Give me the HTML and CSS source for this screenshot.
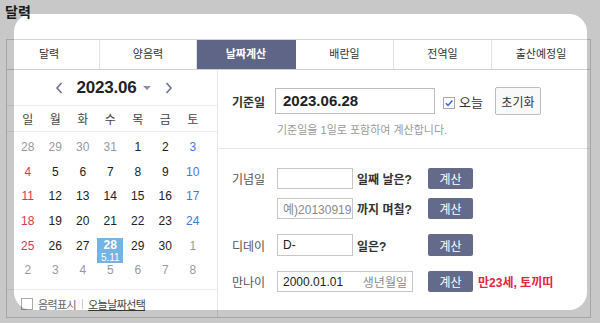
FILE: index.html
```html
<!DOCTYPE html>
<html lang="ko">
<head>
<meta charset="utf-8">
<title>달력</title>
<link rel="stylesheet" href="styles.css">
</head>
<body>
<div class="page">
  <h1 class="title">달력</h1>
  <div class="widget">
    <ul class="tabs">
      <li class="tab t1">달력</li>
      <li class="tab t2">양음력</li>
      <li class="tab t3 active">날짜계산</li>
      <li class="tab t4">배란일</li>
      <li class="tab t5">전역일</li>
      <li class="tab t6">출산예정일</li>
    </ul>
    <div class="content">
      <div class="cal">
        <div class="cal-head">
          <svg class="chev" width="8" height="12" viewBox="0 0 8 12"><path d="M6.5 1 L2 6 L6.5 11"/></svg>
          <span class="ym">2023.06</span>
          <span class="caret"></span>
          <svg class="chev" width="8" height="12" viewBox="0 0 8 12"><path d="M1.5 1 L6 6 L1.5 11"/></svg>
        </div>
        <div class="weekdays">
          <span>일</span><span>월</span><span>화</span><span>수</span><span>목</span><span>금</span><span>토</span>
        </div>
        <div class="days">
          <span class="d off">28</span><span class="d off">29</span><span class="d off">30</span><span class="d off">31</span><span class="d">1</span><span class="d">2</span><span class="d sat">3</span>
          <span class="d sun">4</span><span class="d">5</span><span class="d">6</span><span class="d">7</span><span class="d">8</span><span class="d">9</span><span class="d sat">10</span>
          <span class="d sun">11</span><span class="d">12</span><span class="d">13</span><span class="d">14</span><span class="d">15</span><span class="d">16</span><span class="d sat">17</span>
          <span class="d sun">18</span><span class="d">19</span><span class="d">20</span><span class="d">21</span><span class="d">22</span><span class="d">23</span><span class="d sat">24</span>
          <span class="d sun">25</span><span class="d">26</span><span class="d">27</span><span class="d selcell"><span class="sel"><b>28</b><small>5.11</small></span></span><span class="d">29</span><span class="d">30</span><span class="d off">1</span>
          <span class="d off">2</span><span class="d off">3</span><span class="d off">4</span><span class="d off">5</span><span class="d off">6</span><span class="d off">7</span><span class="d off">8</span>
        </div>
        <div class="cal-foot">
          <span class="cbox"></span><span class="lunar">음력표시</span><span class="sep"></span><span class="pick">오늘날짜선택</span>
        </div>
      </div>
      <div class="calc">
        <div class="base">
          <div class="base-row">
            <span class="base-label">기준일</span>
            <div class="base-input">2023.06.28</div>
            <span class="cbox checked"><svg width="10" height="10" viewBox="0 0 10 10"><path d="M1.8 5.2 L4 7.4 L8.4 2.4"/></svg></span>
            <span class="today-label">오늘</span>
            <span class="reset">초기화</span>
          </div>
          <p class="hint">기준일을 1일로 포함하여 계산합니다.</p>
        </div>
        <div class="rows">
          <div class="row">
            <span class="lbl">기념일</span>
            <span class="field"><span class="inp w75"></span><span class="suffix">일째 날은?</span></span>
            <span class="btn">계산</span>
          </div>
          <div class="row sub">
            <span class="lbl"></span>
            <span class="field"><span class="inp w75 ph">예)20130919</span><span class="suffix">까지 며칠?</span></span>
            <span class="btn">계산</span>
          </div>
          <div class="row r3">
            <span class="lbl">디데이</span>
            <span class="field"><span class="inp w75">D-</span><span class="suffix">일은?</span></span>
            <span class="btn">계산</span>
          </div>
          <div class="row r4">
            <span class="lbl">만나이</span>
            <span class="field"><span class="inp wide"><span>2000.01.01</span><span class="ph">생년월일</span></span></span>
            <span class="btn">계산</span>
            <span class="result">만23세, 토끼띠</span>
          </div>
        </div>
      </div>
    </div>
  </div>
  <div class="spot"></div>
</div>
</body>
</html>
```

FILE: styles.css
```css
* { box-sizing: border-box; }
html, body { margin: 0; padding: 0; }
body {
  background: #fff;
  font-family: "Liberation Sans", "Noto Sans CJK KR", sans-serif;
  color: #333;
  width: 600px;
  height: 323px;
  overflow: hidden;
}
.page { position: relative; width: 600px; height: 323px; }
.title {
  margin: 0;
  height: 39px;
  padding: 3px 0 0 5px;
  font-size: 14px;
  line-height: 18px;
  font-weight: bold;
  color: #222;
}
.widget {
  margin-left: 6px;
  width: 585px;
  height: 279px;
  border: 1px solid #d4d4d4;
  display: flex;
  flex-direction: column;
}
.tabs {
  list-style: none;
  margin: 0;
  padding: 0;
  display: flex;
  height: 30px;
  border-bottom: 1px solid #d0d0d0;
  flex: none;
}
.tab {
  height: 29px;
  line-height: 29px;
  text-align: center;
  font-size: 11px;
  color: #333;
  border-right: 1px solid #e3e3e3;
}
.t1 { width: 93px; padding-right: 8px; }
.t2 { width: 97px; }
.t3 { width: 99px; }
.t4 { width: 98px; }
.t5 { width: 98px; }
.t6 { width: 98px; border-right: none; }
.tab.active {
  background: #5f6586;
  color: #fff;
  font-weight: bold;
  border-right-color: #5f6586;
}
.content { display: flex; flex: 1; }

/* calendar */
.cal {
  width: 211px;
  border-right: 1px solid #e6e6e6;
  display: flex;
  flex-direction: column;
}
.cal-head {
  height: 36px;
  border-bottom: 1px solid #ececec;
  display: flex;
  align-items: center;
  justify-content: center;
  padding-left: 4px;
}
.chev path { fill: none; stroke: #6b7190; stroke-width: 1.6; }
.ym {
  font-size: 17px;
  font-weight: bold;
  color: #222;
  margin: 0 6px 0 13px;
  letter-spacing: -0.2px;
}
.caret {
  width: 0; height: 0;
  border-left: 4px solid transparent;
  border-right: 4px solid transparent;
  border-top: 4px solid #8b8fa3;
  margin-right: 14px;
  margin-top: 1px;
}
.weekdays {
  height: 26px;
  border-bottom: 1px solid #ececec;
  display: grid;
  grid-template-columns: repeat(7, 27.5px);
  padding-left: 7px;
  align-items: center;
  font-size: 12px;
  color: #444;
}
.weekdays span { text-align: center; }
.days {
  height: 157px;
  display: grid;
  grid-template-columns: repeat(7, 27.5px);
  grid-auto-rows: 24.6px;
  padding: 3px 0 0 7px;
  font-size: 12px;
  color: #222;
}
.d { display: flex; align-items: center; justify-content: center; }
.d.off { color: #9a9a9a; }
.d.sun { color: #e2364f; }
.d.sat { color: #3f7bd6; }
.d.selcell { align-items: flex-start; }
.sel {
  margin-top: 4.6px;
  width: 26px;
  height: 25px;
  background: #73b4e4;
  color: #fff;
  display: flex;
  flex-direction: column;
  align-items: center;
  padding-top: 1px;
}
.sel b { font-size: 12px; line-height: 13px; }
.sel small { font-size: 10px; line-height: 11px; }
.cal-foot {
  height: 28px;
  border-top: 1px solid #ececec;
  display: flex;
  align-items: center;
  padding: 0 0 0 14px;
  font-size: 11px;
  color: #666;
}
.cbox {
  width: 12px;
  height: 12px;
  border: 1px solid #a9a9a9;
  background: #fff;
  flex: none;
}
.lunar { margin-left: 5px; letter-spacing: -0.6px; }
.sep { width: 1px; height: 10px; background: #ccc; margin: 0 5px 0 6px; }
.pick { text-decoration: underline; color: #444; letter-spacing: -0.6px; }

/* calculator */
.calc { flex: 1; display: flex; flex-direction: column; }
.base {
  height: 79px;
  border-bottom: 1px solid #e6e6e6;
  padding: 18px 0 0 14px;
}
.base-row { display: flex; align-items: center; height: 26px; }
.base-label { width: 43px; font-size: 12px; font-weight: bold; color: #333; }
.base-input {
  width: 160px;
  height: 26px;
  border: 1px solid #bdbdbd;
  padding-left: 7px;
  font-size: 15px;
  font-weight: bold;
  line-height: 24px;
  color: #222;
}
.cbox.checked { margin-left: 8px; display: flex; align-items: center; justify-content: center; margin-top: 3px; }
.cbox.checked path { fill: none; stroke: #4266d8; stroke-width: 1.5; }
.today-label { margin-left: 4px; font-size: 13px; color: #333; }
.reset {
  margin-left: 12px;
  width: 46px;
  height: 28px;
  border: 1px solid #bdbdbd;
  border-radius: 2px;
  background: #f9f9f9;
  font-size: 12px;
  color: #333;
  display: flex;
  align-items: center;
  justify-content: center;
}
.hint {
  margin: 8px 0 0 45px;
  font-size: 11px;
  line-height: 16px;
  color: #9a9a9a;
}
.rows { padding: 19px 0 0 14px; display: flex; flex-direction: column; }
.row {
  display: grid;
  grid-template-columns: 45px 151px 45px auto;
  height: 21px;
  align-items: center;
}
.row.sub { margin-top: 9px; }
.row.r3 { margin-top: 15px; height: 22px; }
.row.r4 { margin-top: 15px; }
.lbl { font-size: 12px; color: #555; }
.field { display: flex; align-items: center; height: 100%; }
.inp {
  height: 100%;
  border: 1px solid #c6c6c6;
  background: #fff;
  font-size: 12px;
  color: #222;
  display: flex;
  align-items: center;
  padding: 0 5px;
}
.w75 { width: 76px; }
.wide { width: 136px; justify-content: space-between; }
.ph { color: #8a8a8a; }
.suffix { margin-left: 4px; font-size: 12px; font-weight: bold; color: #333; }
.btn {
  height: 100%;
  background: #646a89;
  border-radius: 2px;
  color: #fff;
  font-size: 12px;
  display: flex;
  align-items: center;
  justify-content: center;
}
.result {
  margin-left: 5px;
  font-size: 12px;
  font-weight: bold;
  color: #e3243f;
}

/* dimmed screenshot frame */
.spot {
  position: absolute;
  left: 14px;
  top: 14px;
  width: 573px;
  height: 296px;
  border-radius: 18px;
  box-shadow: 0 0 0 1000px rgba(0, 0, 0, 0.215);
  pointer-events: none;
}
```
